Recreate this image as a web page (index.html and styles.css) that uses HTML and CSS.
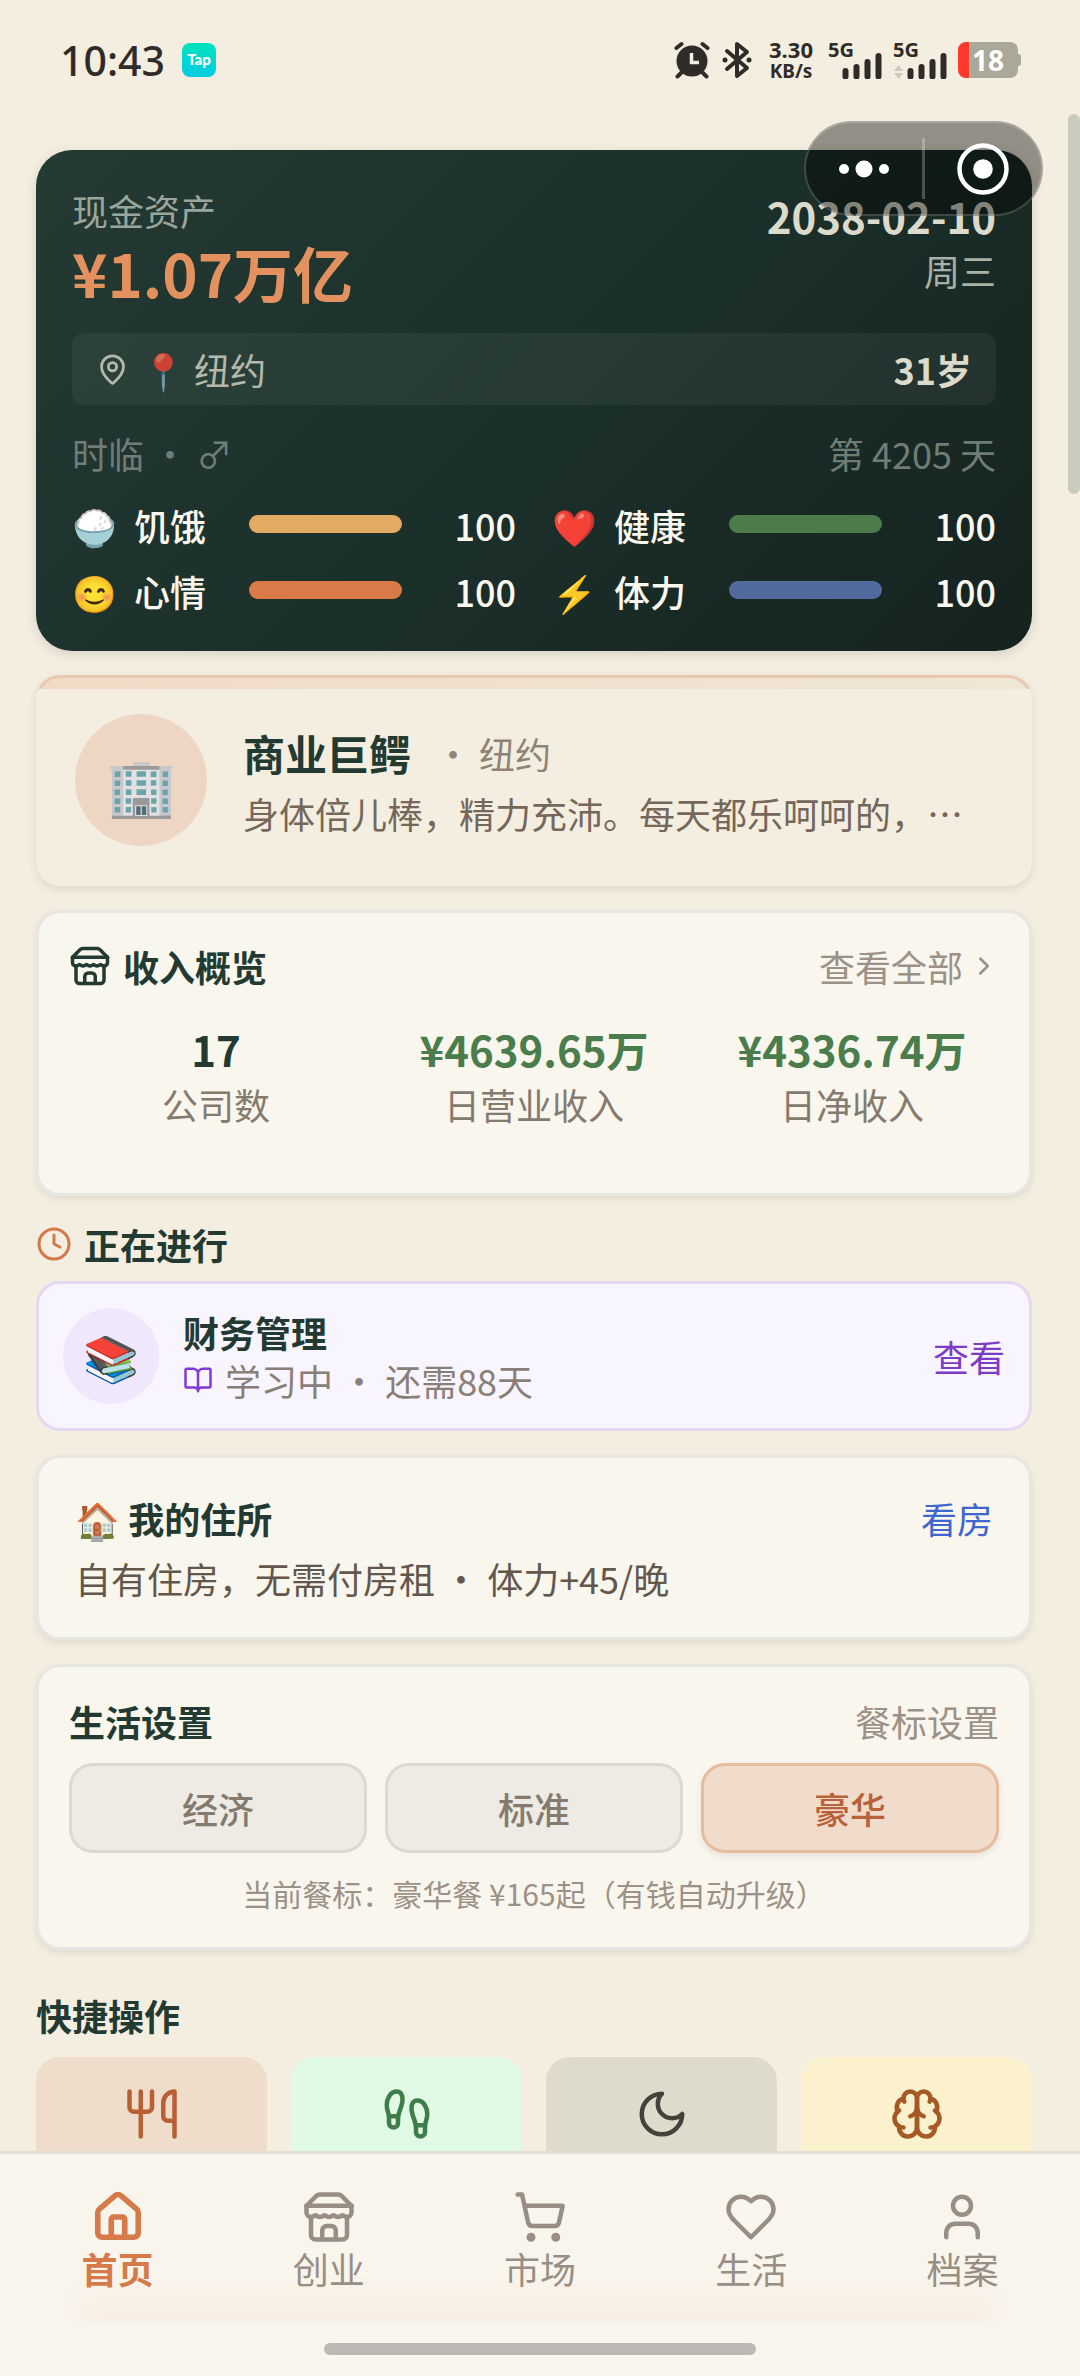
FILE: index.html
```html
<!DOCTYPE html>
<html lang="zh-CN">
<head>
<meta charset="utf-8">
<meta name="viewport" content="width=device-width, initial-scale=1">
<title>首页</title>
<link rel="stylesheet" href="styles.css">
</head>
<body>
<svg class="sprite" aria-hidden="true">
  <symbol id="i-store" viewBox="0 0 24 24"><path d="m2 7 4.41-4.41A2 2 0 0 1 7.83 2h8.34a2 2 0 0 1 1.42.59L22 7"/><path d="M4 12v8a2 2 0 0 0 2 2h12a2 2 0 0 0 2-2v-8"/><path d="M15 22v-4a2 2 0 0 0-2-2h-2a2 2 0 0 0-2 2v4"/><path d="M2 7h20"/><path d="M22 7v3a2 2 0 0 1-2 2a2.7 2.7 0 0 1-1.59-.63.7.7 0 0 0-.82 0A2.7 2.7 0 0 1 16 12a2.7 2.7 0 0 1-1.59-.63.7.7 0 0 0-.82 0A2.7 2.7 0 0 1 12 12a2.7 2.7 0 0 1-1.59-.63.7.7 0 0 0-.82 0A2.7 2.7 0 0 1 8 12a2.7 2.7 0 0 1-1.59-.63.7.7 0 0 0-.82 0A2.7 2.7 0 0 1 4 12a2 2 0 0 1-2-2V7"/></symbol>
</svg>

<header class="status">
  <div class="status-left">
    <span class="clock">10:43</span>
    <span class="tap">Tap</span>
  </div>
  <div class="status-right">
    <svg class="s-alarm" viewBox="0 0 36 38" aria-hidden="true"><circle cx="18" cy="20" r="15.5" fill="currentColor"/><path d="M2.500 7 7.500 3M33.500 7 28.500 3M7 32l-3.500 3.500M29 32l3.500 3.500" stroke="currentColor" stroke-width="4" stroke-linecap="round"/><path d="M17.500 12v9.500h7.500" fill="none" stroke="#f4eee0" stroke-width="3.500"/></svg>
    <svg class="s-bt" viewBox="0 0 30 38" aria-hidden="true"><path d="M5 10 25 27 15 35V3l10 8L5 28" fill="none" stroke="currentColor" stroke-width="4" stroke-linejoin="round" stroke-linecap="round"/><circle cx="3" cy="19" r="2.500" fill="currentColor"/><circle cx="27" cy="19" r="2.500" fill="currentColor"/></svg>
    <span class="speed"><span class="rate">3.30</span><span class="unit">KB/s</span></span>
    <span class="signal"><b>5G</b><svg viewBox="0 0 56 38" aria-hidden="true"><path d="M17.500 30v5.500M28.500 26v9.500M39.500 21v14.500M50.500 15v20.500" stroke="currentColor" stroke-width="6" stroke-linecap="round"/></svg></span>
    <span class="signal"><b>5G</b><svg viewBox="0 0 56 38" aria-hidden="true"><path d="M17.500 30v5.500M28.500 26v9.500M39.500 21v14.500M50.500 15v20.500" stroke="currentColor" stroke-width="6" stroke-linecap="round"/><path d="M1 30l4.500-6L10 30zM1 32l4.500 6L10 32z" fill="#cfc9bd"/></svg></span>
    <span class="battery">18</span>
  </div>
</header>

<div class="capsule">
  <button class="cap-btn" aria-label="更多"><svg viewBox="0 0 52 20" width="52" height="20"><g fill="#fff"><circle cx="6" cy="10" r="5"/><circle cx="26" cy="10" r="8.500"/><circle cx="46" cy="10" r="5"/></g></svg></button>
  <span class="cap-line"></span>
  <button class="cap-btn" aria-label="关闭"><svg viewBox="0 0 52 52" width="52" height="52"><circle cx="26" cy="26" r="23.500" fill="none" stroke="#fff" stroke-width="4.500"/><circle cx="26" cy="26" r="9.800" fill="#fff"/></svg></button>
</div>
<div class="scrollbar"></div>

<main class="page">
  <section class="hero">
    <div class="row top">
      <div class="cash"><p class="label">现金资产</p><p class="amount">¥1.07万亿</p></div>
      <div class="date"><p class="day">2038-02-10</p><p class="week">周三</p></div>
    </div>
    <div class="place row">
      <span class="city"><svg class="icon" viewBox="0 0 24 24" width="33" height="33"><path d="M20 10c0 4.993-5.539 10.193-7.399 11.799a1 1 0 0 1-1.202 0C9.539 20.193 4 14.993 4 10a8 8 0 0 1 16 0"/><circle cx="12" cy="10" r="3"/></svg><span><span class="emoji-dim">📍</span> 纽约</span></span>
      <b class="age">31岁</b>
    </div>
    <div class="row who"><span>时临 • ♂</span><span>第 4205 天</span></div>
    <div class="stats">
      <div class="stat"><span class="emo">🍚</span><span class="name">饥饿</span><span class="bar hunger"></span><span class="num">100</span></div>
      <div class="stat"><span class="emo">❤️</span><span class="name">健康</span><span class="bar health"></span><span class="num">100</span></div>
      <div class="stat"><span class="emo">😊</span><span class="name">心情</span><span class="bar mood"></span><span class="num">100</span></div>
      <div class="stat"><span class="emo">⚡</span><span class="name">体力</span><span class="bar energy"></span><span class="num">100</span></div>
    </div>
  </section>

  <section class="persona">
    <span class="avatar">🏢</span>
    <div class="persona-text">
      <h2>商业巨鳄<span class="sub">• 纽约</span></h2>
      <p>身体倍儿棒，精力充沛。每天都乐呵呵的，…</p>
    </div>
  </section>

  <section class="card income">
    <div class="row head">
      <h3><svg class="icon" viewBox="0 0 24 24" width="42" height="42"><use href="#i-store"/></svg>收入概览</h3>
      <a href="#" class="more">查看全部<svg class="icon" viewBox="0 0 24 24" width="30" height="30"><path d="m9 18 6-6-6-6"/></svg></a>
    </div>
    <div class="figures">
      <div><b>17</b><span>公司数</span></div>
      <div><b class="green">¥4639.65万</b><span>日营业收入</span></div>
      <div><b class="green">¥4336.74万</b><span>日净收入</span></div>
    </div>
  </section>

  <h3 class="ongoing"><svg class="icon" viewBox="0 0 24 24" width="36" height="36"><circle cx="12" cy="12" r="10"/><path d="M12 6v6l4 2"/></svg>正在进行</h3>
  <section class="study">
    <span class="study-icon">📚</span>
    <div class="study-text">
      <h3>财务管理</h3>
      <p><svg class="icon" viewBox="0 0 24 24" width="30" height="30"><path d="M12 7v14M3 18a1 1 0 0 1-1-1V4a1 1 0 0 1 1-1h5a4 4 0 0 1 4 4 4 4 0 0 1 4-4h5a1 1 0 0 1 1 1v13a1 1 0 0 1-1 1h-6a3 3 0 0 0-3 3 3 3 0 0 0-3-3z"/></svg>学习中 • 还需88天</p>
    </div>
    <a href="#" class="see">查看</a>
  </section>

  <section class="card home">
    <div class="row"><h3>🏠 我的住所</h3><a href="#" class="blue">看房</a></div>
    <p>自有住房，无需付房租 • 体力+45/晚</p>
  </section>

  <section class="card life">
    <div class="row"><h3>生活设置</h3><span class="hint">餐标设置</span></div>
    <div class="meals"><button>经济</button><button>标准</button><button class="on">豪华</button></div>
    <p class="note">当前餐标：豪华餐 ¥165起（有钱自动升级）</p>
  </section>

  <h3 class="quick-title">快捷操作</h3>
  <div class="quick">
    <button class="q-eat" aria-label="吃饭"><svg class="icon" viewBox="0 0 24 24" width="54" height="54"><path d="M2 2v7c0 1.100.9 2 2 2h6a2 2 0 0 0 2-2V2M7 2v20M22 15V2a5 5 0 0 0-5 5v6c0 1.100.9 2 2 2zm0 0v7"/></svg></button>
    <button class="q-walk" aria-label="散步"><svg class="icon" viewBox="0 0 24 24" width="54" height="54"><path d="M4 16v-2.380C4 11.500 2.970 10.500 3 8c.03-2.720 1.490-6 4.500-6C9.370 2 10 3.800 10 5.500c0 3.110-2 5.660-2 8.680V16a2 2 0 1 1-4 0Z"/><path d="M20 20v-2.380c0-2.120 1.030-3.120 1-5.620-.03-2.720-1.490-6-4.500-6C14.630 6 14 7.800 14 9.500c0 3.110 2 5.660 2 8.680V20a2 2 0 1 0 4 0Z"/><path d="M16 17h4M4 13h4"/></svg></button>
    <button class="q-sleep" aria-label="睡觉"><svg class="icon" viewBox="0 0 24 24" width="54" height="54"><path d="M12 3a6 6 0 0 0 9 9 9 9 0 1 1-9-9Z"/></svg></button>
    <button class="q-think" aria-label="学习"><svg class="icon" viewBox="0 0 24 24" width="54" height="54"><path d="M12 5a3 3 0 1 0-5.997.125 4 4 0 0 0-2.526 5.770 4 4 0 0 0 .556 6.588A4 4 0 1 0 12 18Z"/><path d="M12 5a3 3 0 1 1 5.997.125 4 4 0 0 1 2.526 5.770 4 4 0 0 1-.556 6.588A4 4 0 1 1 12 18Z"/><path d="M15 13a4.500 4.500 0 0 1-3-4 4.500 4.500 0 0 1-3 4M17.599 6.500a3 3 0 0 0 .399-1.375M6.003 5.125A3 3 0 0 0 6.401 6.500M3.477 10.896a4 4 0 0 1 .585-.396M19.938 10.500a4 4 0 0 1 .585.396M6 18a4 4 0 0 1-1.967-.516M19.967 17.484A4 4 0 0 1 18 18"/></svg></button>
  </div>
</main>

<nav class="tabs">
  <div class="tab-row">
    <a href="#" class="active"><svg class="icon" viewBox="0 0 24 24" width="54" height="54"><path d="M15 21v-8a1 1 0 0 0-1-1h-4a1 1 0 0 0-1 1v8"/><path d="M3 10a2 2 0 0 1 .709-1.528l7-5.999a2 2 0 0 1 2.582 0l7 5.999A2 2 0 0 1 21 10v9a2 2 0 0 1-2 2H5a2 2 0 0 1-2-2z"/></svg>首页</a>
    <a href="#"><svg class="icon" viewBox="0 0 24 24" width="54" height="54"><use href="#i-store"/></svg>创业</a>
    <a href="#"><svg class="icon" viewBox="0 0 24 24" width="54" height="54"><circle cx="8" cy="21" r="1"/><circle cx="19" cy="21" r="1"/><path d="M2.050 2.050h2l2.660 12.420a2 2 0 0 0 2 1.580h9.780a2 2 0 0 0 1.950-1.570l1.650-7.430H5.120"/></svg>市场</a>
    <a href="#"><svg class="icon" viewBox="0 0 24 24" width="54" height="54"><path d="M19 14c1.490-1.460 3-3.210 3-5.500A5.500 5.500 0 0 0 16.500 3c-1.760 0-3 .5-4.500 2-1.500-1.500-2.740-2-4.500-2A5.500 5.500 0 0 0 2 8.500c0 2.300 1.500 4.050 3 5.500l7 7Z"/></svg>生活</a>
    <a href="#"><svg class="icon" viewBox="0 0 24 24" width="54" height="54"><path d="M19 21v-2a4 4 0 0 0-4-4H9a4 4 0 0 0-4 4v2"/><circle cx="12" cy="7" r="4"/></svg>档案</a>
  </div>
  <div class="handle"></div>
</nav>
</body>
</html>
```
FILE: styles.css
```css
* { box-sizing: border-box; margin: 0; padding: 0; }
html { height: 100%; }
body {
  height: 100%;
  overflow: hidden;
  background: #f4eee0;
  color: #233a33;
  font: 400 36px/54px "Noto Sans CJK SC", sans-serif;
}
a { color: inherit; text-decoration: none; }
button { font: inherit; border: 0; cursor: pointer; }
h2 { font-size: 42px; }
h3 { font-size: 36px; font-weight: 700; }
.sprite { position: absolute; width: 0; height: 0; }
.icon { fill: none; stroke: currentColor; stroke-width: 2; stroke-linecap: round; stroke-linejoin: round; flex: none; }
.row { display: flex; justify-content: space-between; align-items: center; }

/* status bar */
.status {
  height: 150px;
  padding: 40px 62px 0 60px;
  display: flex;
  justify-content: space-between;
  align-items: flex-start;
  color: #2f2b28;
}
.status-left, .status-right { display: flex; align-items: center; height: 40px; }
.status-left { gap: 17px; }
.clock { font: 500 41px/40px "Noto Sans", sans-serif; }
.tap {
  width: 34px; height: 34px; border-radius: 8px;
  background: linear-gradient(#00e3bc, #00cce4);
  color: #fff; text-align: center;
  font: 900 15px/32px Lato, sans-serif;
}
.s-alarm { width: 36px; height: 38px; margin-right: 12px; }
.s-bt { width: 30px; height: 38px; margin-right: 14px; }
.speed { width: 50px; display: flex; flex-direction: column; align-items: center; margin-right: 12px; font: 700 22px/22px "Noto Sans", sans-serif; }
.unit { font-size: 19px; }
.signal { position: relative; width: 56px; height: 38px; margin-right: 9px; }
.signal b { position: absolute; left: 0; top: 0; font: 700 20px/18px "Noto Sans", sans-serif; }
.signal svg { display: block; width: 56px; height: 38px; }
.battery {
  position: relative;
  width: 60px; height: 36px; border-radius: 8px;
  background: linear-gradient(90deg, #ff392b 11px, #aaa899 11px);
  color: #fff; text-align: center;
  font: 700 28px/36px "Noto Sans", sans-serif;
}
.battery::after {
  content: ""; position: absolute; left: 60px; top: 12px;
  width: 3px; height: 12px; border-radius: 0 3px 3px 0; background: #aaa899;
}

/* floating mini-program capsule */
.capsule {
  position: absolute; z-index: 5; top: 121px; right: 37px;
  width: 239px; height: 95px; border-radius: 48px;
  border: 2px solid rgba(255, 255, 255, .2);
  background: rgba(0, 0, 0, .4);
  display: flex; align-items: center;
}
.cap-btn { flex: 1; height: 100%; background: none; display: flex; align-items: center; justify-content: center; }
.cap-line { width: 3px; height: 61px; background: rgba(255, 255, 255, .25); }
.scrollbar {
  position: absolute; right: 0; top: 114px;
  width: 12px; height: 380px; border-radius: 6px; background: #c9cbbc;
}

.page { padding: 0 48px 0 36px; }

/* hero */
.hero {
  padding: 33px 36px;
  border-radius: 36px;
  background: linear-gradient(135deg, #243a33, #1c302b 50%, #15231f);
  box-shadow: 0 3px 12px rgba(30, 50, 45, .15);
  color: #faf7ee;
}
.top { align-items: flex-start; }
.label { line-height: 54px; color: #9aa69c; }
.amount { font-size: 60px; font-weight: 700; line-height: 70px; color: #e2915f; }
.date { text-align: right; padding-top: 6px; }
.day { font-size: 42px; font-weight: 700; line-height: 54px; color: #dcdacb; }
.week { color: #a9b0a4; }
.place {
  height: 72px; margin-top: 26px; padding: 0 24px;
  border-radius: 12px; background: rgba(255, 255, 255, .05);
}
.city { display: flex; align-items: center; gap: 12px; color: #b4b9ac; }
.emoji-dim { opacity: .8; }
.age { color: #dcdacb; }
.who { margin-top: 21px; color: #6f7d75; }
.stats { display: grid; grid-template-columns: 1fr 1fr; gap: 12px 36px; margin-top: 18px; }
.stat { display: grid; grid-template-columns: 62px 115px 153px 1fr; align-items: center; }
.name, .num { font-weight: 500; }
.bar { height: 18px; border-radius: 9px; margin-bottom: 3px; }
.num { text-align: right; }
.hunger { background: #e3aa63; }
.health { background: #4c7c4a; }
.mood { background: #d97a48; }
.energy { background: #526b9f; }

/* persona */
.persona {
  position: relative;
  margin-top: 24px; padding: 39px 48px 40px 39px;
  display: flex; align-items: center; gap: 36px;
  border-radius: 24px;
  background: #f4eee0;
  box-shadow: 0 3px 9px rgba(60, 50, 30, .12);
}
/* tinted cap along the top edge */
.persona::before {
  content: ""; position: absolute; inset: 0;
  border: 3px solid #e6c9ae; border-radius: 24px;
  background: linear-gradient(90deg, #f1dac6, #efe6d6);
  clip-path: inset(0 0 calc(100% - 14px) 0);
}
.avatar { flex: none; width: 132px; height: 132px; border-radius: 50%; background: #edd7c4; font-size: 57px; line-height: 136px; text-align: center; }
.persona-text { min-width: 0; padding-top: 6px; }
.persona h2 { line-height: 60px; display: flex; gap: 24px; align-items: center; }
.sub { font-size: 36px; font-weight: 400; color: #8f8376; }
.persona p { line-height: 60px; color: #75675a; white-space: nowrap; }

/* cards */
.card {
  margin-top: 24px; border: 3px solid #e6e6e3; border-radius: 24px;
  background: #f9f6ed; box-shadow: 0 3px 6px rgba(40, 60, 50, .1);
}
.income { padding: 26px 30px 62px; }
.income h3 { display: flex; align-items: center; gap: 12px; }
.more { display: flex; align-items: center; gap: 6px; color: #9c9186; }
.figures { display: grid; grid-template-columns: repeat(3, 1fr); gap: 24px; margin-top: 28px; text-align: center; }
.figures b, .figures span { display: block; white-space: nowrap; }
.figures b { font-size: 42px; line-height: 56px; }
.figures span { color: #857a6e; }
.green { color: #4a7c4c; }

.ongoing { display: flex; align-items: center; gap: 12px; margin-top: 21px; }
.ongoing .icon { color: #d4794a; }
.study {
  margin-top: 10px; padding: 24px; min-height: 150px;
  display: flex; align-items: center; gap: 24px;
  border: 3px solid #e5d8f3; border-radius: 24px; background: #f9f5fe;
}
.study-icon { width: 96px; height: 96px; border-radius: 50%; background: #f0e7fc; font-size: 45px; line-height: 96px; text-align: center; }
.study-text { flex: 1; }
.study h3, .study p { line-height: 48px; }
.study p { display: flex; align-items: center; gap: 12px; color: #8a7f78; }
.study .icon { color: #8238d6; }
.see { color: #7d3cc4; }

.home { padding: 33px 36px 32px; }
.blue { color: #3e66cf; }
.home p { margin-top: 6px; color: #63574b; }

.life { padding: 27px 30px 31px; }
.hint, .note { color: #9c9186; }
.meals { display: grid; grid-template-columns: repeat(3, 1fr); gap: 18px; margin-top: 15px; }
.meals button { height: 90px; border: 3px solid #dcd9d1; border-radius: 24px; background: #eeebe4; color: #857a6e; font-weight: 500; }
.meals .on { border-color: #e6bc9f; background: #f1dccc; color: #b9623a; box-shadow: 0 3px 6px rgba(60, 50, 30, .1); }
.note { margin-top: 18px; font-size: 30px; line-height: 45px; text-align: center; }

.quick-title { margin-top: 38px; }
.quick { display: grid; grid-template-columns: repeat(4, 1fr); gap: 24px; margin-top: 15px; }
.quick button { height: 180px; padding-top: 30px; border-radius: 24px; display: flex; justify-content: center; align-items: flex-start; }
.q-eat { background: #efdcca; color: #b95f33; }
.q-walk { background: #e0fae6; color: #3e7d49; }
.q-sleep { background: #dfdbcc; color: #45403a; }
.q-think { background: #fbf1cd; color: #a65924; }

/* bottom tabs */
.tabs {
  position: fixed; left: 0; right: 0; bottom: 0; height: 225px;
  border-top: 3px solid #e3e0d3;
  background: linear-gradient(90deg, #f8f5ec 60px, transparent 100px calc(100% - 110px), #f8f5ec calc(100% - 70px)), linear-gradient(#f8f5ec 120px, #f8eee4 160px 166px, #f8f5ec 169px);
}
.tab-row { display: flex; padding: 36px 12px 0; }
.tab-row a { flex: 1; display: flex; flex-direction: column; align-items: center; line-height: 48px; color: #988e83; }
.tab-row .active { color: #d67a4a; font-weight: 700; }
.active .icon { stroke-width: 2.5; }
.handle { position: absolute; left: 30%; right: 30%; bottom: 21px; height: 12px; border-radius: 6px; background: #bcb8b3; }
```
